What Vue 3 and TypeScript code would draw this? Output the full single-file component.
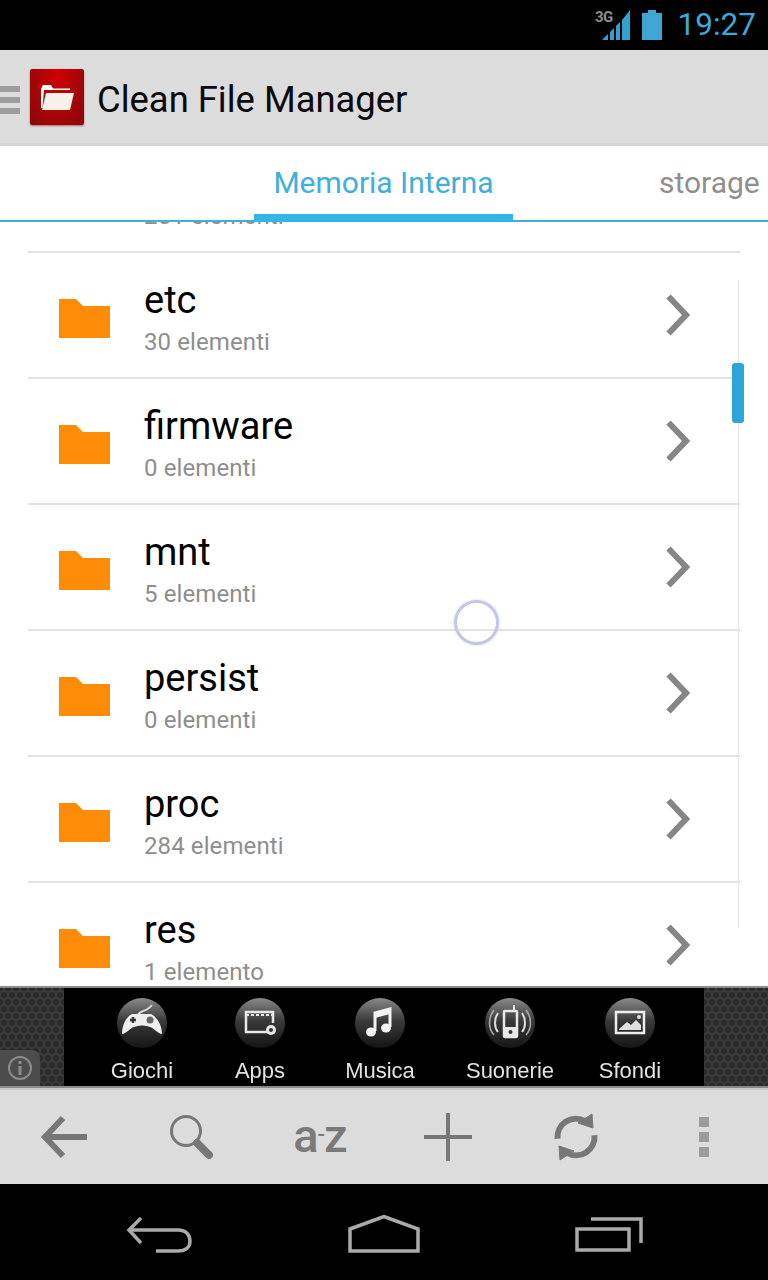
<script setup lang="ts">
interface Row { name: string; sub: string }
const rows: Row[] = [
  { name: '', sub: '251 elementi' },
  { name: 'etc', sub: '30 elementi' },
  { name: 'firmware', sub: '0 elementi' },
  { name: 'mnt', sub: '5 elementi' },
  { name: 'persist', sub: '0 elementi' },
  { name: 'proc', sub: '284 elementi' },
  { name: 'res', sub: '1 elemento' },
]
</script>

<template>
  <div class="phone">
    <header class="status">
      <svg class="signal" width="40" height="32" viewBox="0 0 40 32">
        <text x="3" y="13" class="g3">3G</text>
        <path d="M10 31 L16 25 V31Z M18 31 V23 L22 19 V31Z M24 31 V17 L28 13 V31Z M30 31 V11 L38 1 V31Z" fill="#33a0cf" />
      </svg>
      <svg class="battery" width="20" height="30" viewBox="0 0 20 30">
        <path d="M6 0 H14 V3 H20 V30 H0 V3 H6Z" fill="#3fa6d3" />
      </svg>
      <span class="time">19:27</span>
    </header>

    <div class="action">
      <div class="burger"><i></i><i></i><i></i></div>
      <div class="logo">
        <svg width="33" height="25" viewBox="0 0 33 25">
          <path d="M0 4 V23 H1.500 L3 5 H29 V3.500 H12 L10 0 H2Z" fill="#fff" />
          <path d="M5 8 H33 L29 25 H1Z" fill="#f7f1ea" />
        </svg>
      </div>
      <h1 class="title">Clean File Manager</h1>
    </div>

    <nav class="tabs">
      <div class="tab-track">
        <span class="tab active">Memoria Interna</span>
        <span class="tab other">storage</span>
      </div>
    </nav>

    <main class="list-wrap">
      <ul class="list">
        <li v-for="row in rows" :key="row.sub + row.name" class="row">
          <svg class="folder" width="51" height="39" viewBox="0 0 51 39">
            <path d="M0 0 H17 L24 7 H51 V39 H0Z" fill="#ff8c06" />
          </svg>
          <div class="texts">
            <div class="name">{{ row.name }}</div>
            <div class="sub">{{ row.sub }}</div>
          </div>
          <svg class="chev" width="24" height="42" viewBox="0 0 24 42">
            <path d="M2.500 2.500 L20 21 L2.500 39.500" fill="none" stroke="#868686" stroke-width="6" />
          </svg>
        </li>
      </ul>
      <div class="scroll-line"></div>
      <div class="scroll-thumb"></div>
      <div class="ring"></div>
    </main>

    <section class="ad">
      <div class="hex">
        <div class="info">
          <svg width="26" height="26" viewBox="0 0 26 26">
            <circle cx="13" cy="13" r="11" fill="none" stroke="#8c8c8c" stroke-width="2" />
            <rect x="11.500" y="11" width="3" height="9" fill="#8c8c8c" />
            <rect x="11.500" y="6" width="3" height="3" fill="#8c8c8c" />
          </svg>
        </div>
      </div>
      <div class="ad-items">
        <div class="ad-item">
          <svg class="ad-icon" width="50" height="50" viewBox="0 0 50 50">
            <defs>
              <linearGradient id="disc" x1="0" y1="0" x2="0" y2="1">
                <stop offset="0" stop-color="#8a8a8a" />
                <stop offset=".45" stop-color="#3a3a3a" />
                <stop offset="1" stop-color="#151515" />
              </linearGradient>
            </defs>
            <circle cx="25" cy="25" r="25" fill="url(#disc)" />
            <path d="M21 17 C23 12 30 14 35 7" fill="none" stroke="#ddd" stroke-width="2" />
            <path d="M15 16 H34 C40 19 45 27 45 36 C41 36 37 30 33 29 C27 27 22 27 17 29 C13 30 9 36 5 36 C5 27 9 19 15 16Z" fill="#eee" />
            <path d="M13 22 H19 M16 19 V25" stroke="#333" stroke-width="2.500" />
            <circle cx="33" cy="22" r="3.500" fill="#666" />
          </svg>
          <span>Giochi</span>
        </div>
        <div class="ad-item">
          <svg class="ad-icon" width="50" height="50" viewBox="0 0 50 50">
            <circle cx="25" cy="25" r="25" fill="url(#disc)" />
            <path d="M33 34 H11 V14 H38 V25" fill="none" stroke="#e8e8e8" stroke-width="2.500" />
            <path d="M11 17 H38" stroke="#e8e8e8" stroke-width="2" stroke-dasharray="3 2" />
            <circle cx="36" cy="32" r="5" fill="#e8e8e8" />
            <circle cx="36" cy="32" r="2" fill="#333" />
          </svg>
          <span>Apps</span>
        </div>
        <div class="ad-item">
          <svg class="ad-icon" width="50" height="50" viewBox="0 0 50 50">
            <circle cx="25" cy="25" r="25" fill="url(#disc)" />
            <path d="M20 33 V15 L35 11 V29" fill="none" stroke="#f2f2f2" stroke-width="3" />
            <path d="M20 15 L35 11 V16 L20 20Z" fill="#f2f2f2" />
            <ellipse cx="16" cy="34" rx="5" ry="4.500" fill="#f2f2f2" />
            <ellipse cx="31" cy="30" rx="5" ry="4.500" fill="#f2f2f2" />
          </svg>
          <span>Musica</span>
        </div>
        <div class="ad-item">
          <svg class="ad-icon" width="50" height="50" viewBox="0 0 50 50">
            <circle cx="25" cy="25" r="25" fill="url(#disc)" />
            <rect x="19" y="13" width="13" height="26" rx="1" fill="none" stroke="#e8e8e8" stroke-width="2.500" />
            <rect x="19" y="29" width="13" height="10" fill="#e8e8e8" />
            <circle cx="25.500" cy="34" r="2" fill="#333" />
            <path d="M29 13 V7" stroke="#e8e8e8" stroke-width="2" />
            <path d="M13 15 C9 21 9 29 13 34 M37 15 C41 21 41 29 37 34" fill="none" stroke="#ddd" stroke-width="2" />
            <path d="M9 12 C3 20 3 30 9 37 M41 12 C47 20 47 30 41 37" fill="none" stroke="#aaa" stroke-width="1.500" />
          </svg>
          <span>Suonerie</span>
        </div>
        <div class="ad-item">
          <svg class="ad-icon" width="50" height="50" viewBox="0 0 50 50">
            <circle cx="25" cy="25" r="25" fill="url(#disc)" />
            <rect x="11" y="14" width="28" height="21" fill="none" stroke="#eee" stroke-width="2.500" />
            <path d="M14 31 L22 24 L26 27 L31 22 L36 27 V32 H14Z" fill="#e0e0e0" />
            <circle cx="34" cy="19" r="2" fill="#e0e0e0" />
          </svg>
          <span>Sfondi</span>
        </div>
      </div>
      <div class="hex"></div>
    </section>

    <footer class="toolbar">
      <div class="tool">
        <svg width="48" height="48" viewBox="0 0 48 48">
          <path d="M23 5 L5 24 L23 43 M5 24 H47" fill="none" stroke="#777" stroke-width="6" />
        </svg>
      </div>
      <div class="tool">
        <svg width="48" height="48" viewBox="0 0 48 48">
          <circle cx="18" cy="18" r="14.500" fill="none" stroke="#777" stroke-width="3" />
          <path d="M29 30 L41 42" stroke="#777" stroke-width="8" stroke-linecap="round" />
        </svg>
      </div>
      <div class="tool az">a<b>-</b>z</div>
      <div class="tool">
        <svg width="48" height="48" viewBox="0 0 48 48">
          <path d="M24 0 V48 M0 24 H48" stroke="#777" stroke-width="4" />
        </svg>
      </div>
      <div class="tool">
        <svg width="48" height="48" viewBox="0 0 48 48">
          <path d="M5.500 25.700 A18.500 18.500 0 0 1 33 8" fill="none" stroke="#777" stroke-width="6" />
          <path d="M40 1 L41 15 L26 10Z" fill="#777" stroke="#777" />
          <g transform="rotate(180 24 24)">
            <path d="M5.500 25.700 A18.500 18.500 0 0 1 33 8" fill="none" stroke="#777" stroke-width="6" />
            <path d="M40 1 L41 15 L26 10Z" fill="#777" stroke="#777" />
          </g>
        </svg>
      </div>
      <div class="tool kebab"><i></i><i></i><i></i></div>
    </footer>

    <footer class="nav">
      <div class="nav-btn">
        <svg width="68" height="36" viewBox="0 0 68 36">
          <path d="M15 1 L3 13 L15 26 M3 13 H52 C60 13 64 18 64 24 C64 30 60 34 52 34 H30" fill="none" stroke="#aaa" stroke-width="3.500" />
        </svg>
      </div>
      <div class="nav-btn home">
        <svg width="72" height="38" viewBox="0 0 72 38">
          <path d="M2 14 L36 1.500 L70 14 V36 H2Z" fill="none" stroke="#aaa" stroke-width="3.500" />
        </svg>
      </div>
      <div class="nav-btn recent">
        <svg width="68" height="36" viewBox="0 0 68 36">
          <rect x="2" y="12" width="52" height="21" fill="none" stroke="#aaa" stroke-width="3.500" />
          <path d="M16 2 H66 V26" fill="none" stroke="#aaa" stroke-width="3.500" />
        </svg>
      </div>
    </footer>
  </div>
</template>

<style scoped>
.phone {
  width: 768px;
  height: 1280px;
  display: flex;
  flex-direction: column;
  overflow: hidden;
  background: #fff;
  font-family: Roboto, "Liberation Sans", sans-serif;
}

.status {
  height: 50px;
  flex: none;
  background: #000;
  display: flex;
  align-items: flex-start;
  justify-content: flex-end;
  padding-right: 12px;
  box-sizing: border-box;
}
.signal { margin-top: 9px; margin-right: 10px; }
.g3 { font: 700 15px "Roboto", sans-serif; fill: #8f8f8f; letter-spacing: -0.5px; }
.battery { margin-top: 10px; margin-right: 16px; }
.time {
  color: #3fa8d6;
  font-size: 31.5px;
  line-height: 50px;
  font-weight: 400;
}

.action {
  height: 96px;
  flex: none;
  box-sizing: border-box;
  background: #dcdcdc;
  border-bottom: 3px solid #d5d5d5;
  display: flex;
  align-items: center;
}
.burger {
  width: 20px;
  margin-right: 10px;
  margin-top: 6px;
  display: flex;
  flex-direction: column;
  gap: 5px;
}
.burger i {
  display: block;
  height: 6px;
  background: #9d9d9d;
}
.logo {
  width: 54px;
  height: 56px;
  margin-top: 1px;
  border-radius: 2px;
  background: radial-gradient(ellipse at 50% 8%, #d00000 0%, #a80508 55%, #8a0609 100%);
  box-shadow: 0 1px 2px rgba(120, 0, 0, 0.5);
  display: flex;
  align-items: center;
  justify-content: center;
}
.title {
  margin: 6px 0 0 13px;
  font-size: 36.4px;
  font-weight: 400;
  color: #0a0a0a;
  line-height: 44px;
}

.tabs {
  height: 76px;
  flex: none;
  box-sizing: border-box;
  background: #fff;
  border-bottom: 2px solid #45aed3;
  position: relative;
  z-index: 2;
}
.tab-track {
  display: flex;
  height: 100%;
  padding-left: 254px;
}
.tab {
  font-size: 30px;
  line-height: 74px;
}
.active {
  width: 259px;
  text-align: center;
  color: #40aede;
  height: 76px;
  box-sizing: border-box;
  border-bottom: 8px solid #33b5e5;
}
.other {
  margin-left: 146px;
  color: #8f8f8f;
}

.list-wrap {
  flex: 1;
  min-height: 0;
  position: relative;
  overflow: hidden;
}
.list {
  list-style: none;
  margin: -95px 28px 0;
  padding: 0;
}
.row {
  height: 126px;
  box-sizing: border-box;
  border-bottom: 2px solid #e2e2e2;
  padding-top: 6px;
  padding-left: 31px;
  display: flex;
  align-items: center;
}
.folder { flex: none; }
.texts {
  margin-left: 34px;
  flex: 1;
}
.name {
  min-height: 42px;
  margin-top: -1px;
  font-size: 38px;
  line-height: 42px;
  color: #000;
}
.sub {
  margin-top: 7px;
  font-size: 24px;
  letter-spacing: 0.1px;
  line-height: 28px;
  color: #8e8e8e;
}
.chev {
  flex: none;
  margin-right: 50px;
  margin-bottom: 6px;
}
.scroll-line {
  position: absolute;
  left: 738px;
  top: 58px;
  width: 1px;
  height: 648px;
  background: #e4e4e4;
}
.scroll-thumb {
  position: absolute;
  left: 732px;
  top: 141px;
  width: 12px;
  height: 60px;
  border-radius: 3px;
  background: #2aa7d8;
}
.ring {
  position: absolute;
  left: 454px;
  top: 378px;
  width: 45px;
  height: 45px;
  box-sizing: border-box;
  border-radius: 50%;
  border: 3px solid #c3c7e2;
  box-shadow: 0 0 3px rgba(190, 195, 235, 0.7);
}

.ad {
  height: 102px;
  flex: none;
  box-sizing: border-box;
  background: #000;
  border-top: 2px solid #8a8a8a;
  border-bottom: 2px solid #8a8a8a;
  display: flex;
}
.hex {
  width: 64px;
  flex: none;
  position: relative;
  background-color: #3a3a3a;
  background-image:
    radial-gradient(circle, #2a2a2a 0 2.6px, transparent 3.2px),
    radial-gradient(circle, #2a2a2a 0 2.6px, transparent 3.2px);
  background-size: 8px 14px;
  background-position: 0 0, 4px 7px;
}
.info {
  position: absolute;
  left: 0;
  bottom: 0;
  width: 40px;
  height: 36px;
  background: #4c4c4c;
  border-top-right-radius: 8px;
  display: flex;
  align-items: center;
  justify-content: center;
}
.ad-items {
  flex: 1;
  display: grid;
  grid-template-columns: 118px 118px 122px 138px 102px;
  padding-left: 19px;
}
.ad-item {
  display: flex;
  flex-direction: column;
  align-items: center;
  filter: blur(0.7px);
}
.ad-icon {
  margin-top: 10px;
  flex: none;
}
.ad-item span {
  margin-top: 10px;
  font-family: "Liberation Sans", Arial, sans-serif;
  font-size: 22px;
  line-height: 26px;
  color: #e2e2e2;
}

.toolbar {
  height: 96px;
  flex: none;
  box-sizing: border-box;
  background: #dcdcdc;
  border-top: 2px solid #c8c8c8;
  display: flex;
}
.tool {
  width: 128px;
  display: flex;
  align-items: center;
  justify-content: center;
}
.az {
  font-family: Roboto, sans-serif;
  font-size: 47px;
  font-weight: 500;
  color: #7a7a7a;
  line-height: 1;
  letter-spacing: -1px;
  transform: translateY(-2px);
}
.az b {
  font-size: 22px;
  font-weight: 500;
}
.kebab {
  flex-direction: column;
  gap: 5px;
}
.kebab i {
  display: block;
  width: 10px;
  height: 10px;
  background: #9b9b9b;
}

.nav {
  height: 96px;
  flex: none;
  background: #000;
  display: grid;
  grid-template-columns: repeat(3, 224px);
  padding-left: 48px;
}
.nav-btn {
  display: flex;
  align-items: flex-start;
  justify-content: center;
  padding-top: 33px;
}
.home { padding-top: 31px; }
.recent { padding-left: 2px; }
</style>
